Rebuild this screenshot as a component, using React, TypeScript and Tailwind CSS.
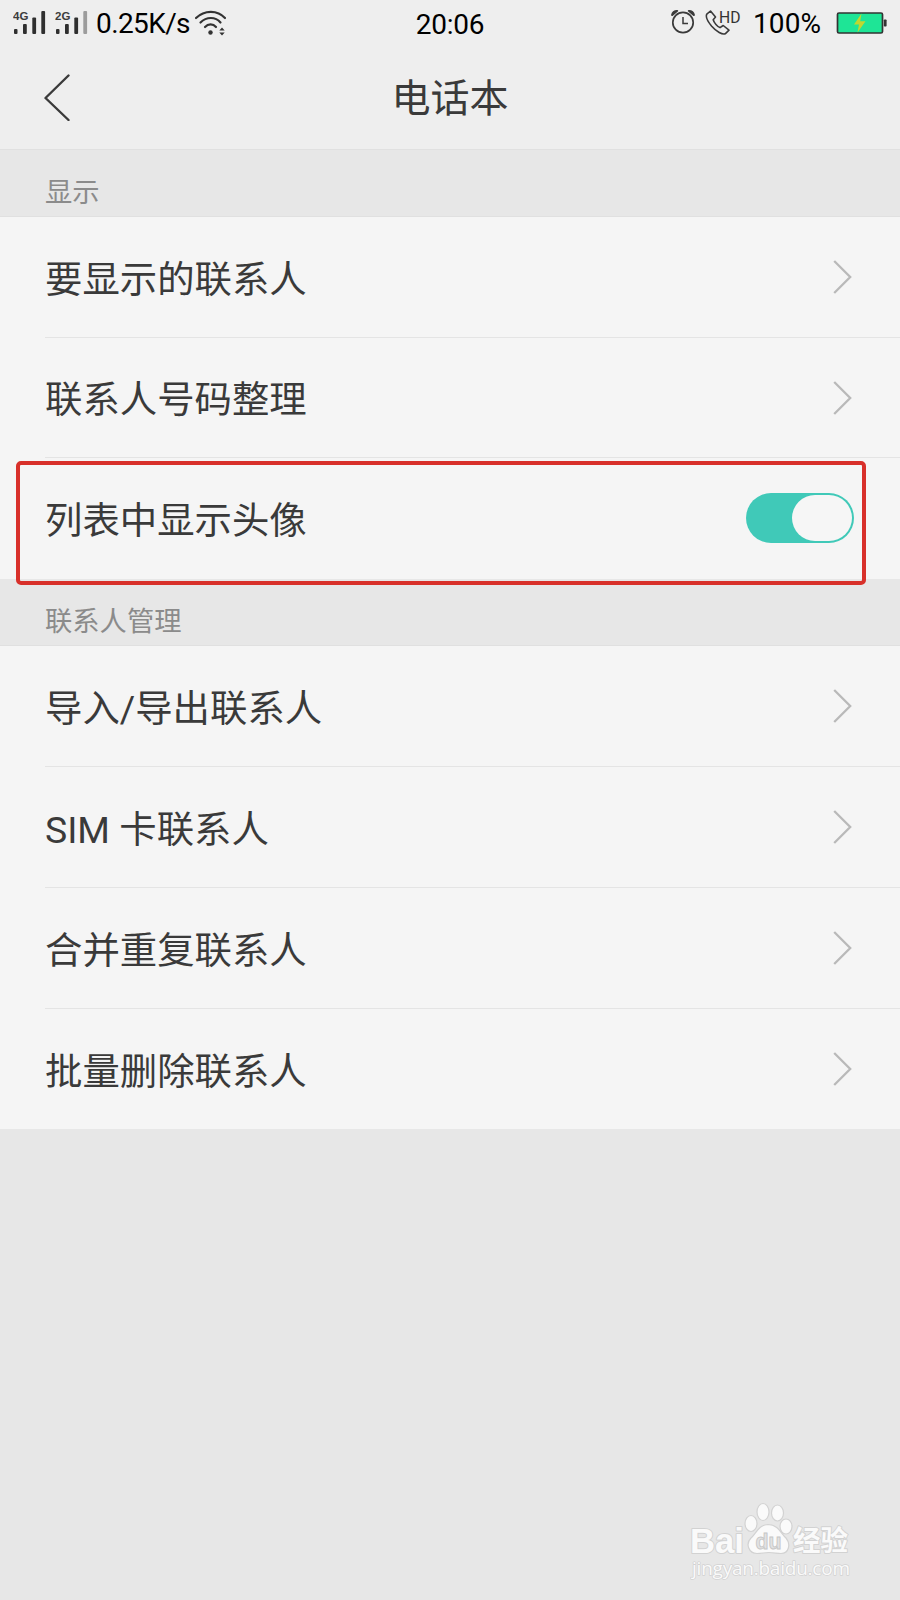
import React, { useState } from "react";

type Item = {
	label: string;
	height: string;
	toggle?: boolean;
};

type Section = {
	title: string;
	items: Item[];
};

const sections: Section[] = [
	{
		title: "显示",
		items: [
			{ label: "要显示的联系人", height: "h-[121px]" },
			{ label: "联系人号码整理", height: "h-[120px]" },
			{ label: "列表中显示头像", height: "h-[121px]", toggle: true },
		],
	},
	{
		title: "联系人管理",
		items: [
			{ label: "导入/导出联系人", height: "h-[121px]" },
			{ label: "SIM 卡联系人", height: "h-[121px]" },
			{ label: "合并重复联系人", height: "h-[121px]" },
			{ label: "批量删除联系人", height: "h-[120px]" },
		],
	},
];

const Signal: React.FC<{ label: string; weak?: boolean }> = ({
	label,
	weak,
}) => (
	<svg width="34" height="26" viewBox="0 0 34 26" fill="#2f2f2f">
		<text
			x="0"
			y="9"
			fontSize="11.5"
			fontWeight="700"
			fontFamily="Liberation Sans, sans-serif"
			fill="#3c3c3c"
		>
			{label}
		</text>
		<rect x="1" y="18" width="3.5" height="5" rx="1" />
		<rect x="10" y="13" width="3.8" height="10" rx="1" />
		<rect x="19.3" y="6.5" width="3.8" height="16.5" rx="1" />
		<rect
			x="28.3"
			y="0"
			width="3.8"
			height="23"
			rx="1"
			fill={weak ? "#9c9c9c" : "#2f2f2f"}
		/>
	</svg>
);

const Wifi = () => (
	<svg width="34" height="28" viewBox="0 0 34 28" fill="none" stroke="#333">
		<g strokeWidth="2.2" strokeLinecap="round">
			<path d="M2 8C10.5 -.3 23.5 -.3 31 8" />
			<path d="M6.5 12.5C12.5 6.5 21.5 6.5 26.5 12.5" />
			<path d="M11 17C14.3 13.5 19 13.5 22 17" />
		</g>
		<circle cx="16.5" cy="22.5" r="2.2" fill="#333" stroke="none" />
		<path
			d="M25.3 20.500l2.700-3 2.700 3zM25.300 22.500l2.700 3 2.700-3z"
			fill="#333"
			stroke="none"
		/>
	</svg>
);

const Alarm = () => (
	<svg width="26" height="26" viewBox="0 0 26 26" fill="none" stroke="#3a3a3a">
		<circle cx="13" cy="13.5" r="10.2" strokeWidth="1.7" />
		<path d="M13 8v6.500h5" strokeWidth="1.5" />
		<path
			d="M2 6C2.500 3 4.500 1.800 7.300 1.800L2.300 6zM24 6C23.500 3 21.500 1.800 18.700 1.800L23.700 6z"
			fill="#3a3a3a"
			strokeWidth="1.8"
			strokeLinejoin="round"
		/>
	</svg>
);

const CallHd = () => (
	<svg width="38" height="28" viewBox="0 0 38 28" fill="none">
		<path
			d="M5.500 2L1.800 5.200C.8 7 2 11.500 6.500 17C11.500 22.800 17.500 26 20.200 24.800L24 21.200L18.200 16.500L15 18.600C12.500 17.700 9 13.700 8.200 10.700L10.500 8Z"
			stroke="#3a3a3a"
			strokeWidth="1.6"
			strokeLinejoin="round"
		/>
		<text
			x="14"
			y="13.5"
			fontSize="15.8"
			fontWeight="400"
			textLength="21.5"
			lengthAdjust="spacingAndGlyphs"
			fontFamily="Roboto, sans-serif"
			fill="#333"
		>
			HD
		</text>
	</svg>
);

const Battery = () => (
	<svg width="51" height="23" viewBox="0 0 51 23">
		<rect x="1.5" y="1" width="45" height="20" rx="1.5" fill="#1ee596" stroke="#333" strokeWidth="1.7" />
		<rect x="47.8" y="7.5" width="2.8" height="7" rx=".8" fill="#333" />
		<path d="M25.500 1.500L18 12.500H23L21.500 20.500L29.500 9.300H24.200Z" fill="#bfd730" />
	</svg>
);

const StatusBar = () => (
	<div className="relative flex h-12 items-center justify-between px-[13px] font-[Roboto] text-[28px] font-normal text-black">
		<div className="flex items-center pb-px">
			<Signal label="4G" />
			<div className="w-2" />
			<Signal label="2G" weak />
			<span className="ml-[7px] w-[95px] whitespace-nowrap tracking-[-0.6px]">0.25K/s</span>
			<div className="ml-[3px]">
				<Wifi />
			</div>
		</div>
		<span className="absolute left-1/2 -translate-x-1/2 pt-px tracking-[-0.2px]">20:06</span>
		<div className="flex items-center pb-px">
			<div className="pb-[3px]">
				<Alarm />
			</div>
			<div className="ml-[9px] pb-px">
				<CallHd />
			</div>
			<span className="ml-[10px] mr-[12px] w-[71px] whitespace-nowrap tracking-[0.1px]">100%</span>
			<Battery />
		</div>
	</div>
);

const Chevron = () => (
	<svg width="20" height="36" viewBox="0 0 20 36" fill="none">
		<path d="M1.200 2L17.200 18L1.200 34" stroke="#b9b9b9" strokeWidth="2.3" />
	</svg>
);

const Watermark = () => (
	<svg
		className="absolute bottom-[20px] right-[44px]"
		width="166"
		height="80"
		viewBox="0 0 166 80"
		fill="#fafafa"
		stroke="#d2d2d2"
		strokeWidth="1.2"
	>
		<g paintOrder="stroke" strokeLinejoin="round" fontFamily="Liberation Sans, 'Noto Sans CJK SC', sans-serif">
			<text x="0" y="53" fontSize="35" fontWeight="700" textLength="54" lengthAdjust="spacingAndGlyphs" strokeWidth="2">
				Bai
			</text>
			<text x="103" y="50.5" fontSize="28" fontWeight="700" textLength="55" lengthAdjust="spacingAndGlyphs" strokeWidth="2">
				经验
			</text>
			<text x="2" y="74.5" fontSize="19" fontFamily="Open Sans, sans-serif" textLength="158" lengthAdjust="spacing" strokeWidth="1.5">
				jingyan.baidu.com
			</text>
		</g>
		<ellipse cx="61" cy="23.5" rx="6" ry="8" />
		<ellipse cx="73" cy="12" rx="6" ry="8.5" />
		<ellipse cx="87.5" cy="13" rx="6" ry="8" />
		<ellipse cx="96" cy="26.5" rx="6" ry="7.5" />
		<path d="M78 24.500C68 25 66 34 61 38C55 44 59 53.500 67 53.500C72 53.500 74 52.500 79 52.500S87 53.500 91 53.500C99 53.500 101 44 96 38C91 34 89 25 78 24.500Z" />
		<text x="65.5" y="49" fontSize="22" fontWeight="700" fontFamily="Liberation Sans, sans-serif" textLength="26" lengthAdjust="spacingAndGlyphs" fill="#e2e2e2" stroke="#c6c6c6" strokeWidth=".9">
			du
		</text>
	</svg>
);

const App: React.FC = () => {
	const [showAvatar, setShowAvatar] = useState(true);

	return (
		<div className="relative h-[1600px] w-[900px] overflow-hidden bg-[#e7e7e7] font-['Roboto','Noto_Sans_CJK_SC',sans-serif] text-[#3a3a3a]">
			<header className="h-[150px] border-b border-[#e0e0e0] bg-[#eeeeee]">
				<StatusBar />
				<div className="relative flex h-[100px] items-center justify-center pt-[3px]">
					<button className="absolute left-[43px] top-[25px]">
						<svg width="28" height="48" viewBox="0 0 28 48" fill="none">
							<path
								d="M25.500 2.500L2.500 25L25.500 47"
								stroke="#3a3a3a"
								strokeWidth="2.4"
								strokeLinejoin="round"
								strokeLinecap="round"
							/>
						</svg>
					</button>
					<h1 className="text-[39px] font-normal leading-none">电话本</h1>
				</div>
			</header>

			{sections.map((section) => (
				<section key={section.title}>
					<h2 className="flex h-[67px] items-center border-b border-[#e0e0e0] pl-[45px] pt-[21px] text-[27.3px] font-normal text-[#8b8b8b]">
						{section.title}
					</h2>
					<ul className="bg-[#f5f5f5]">
						{section.items.map((item, i) => (
							<li key={item.label} className={`${item.height} relative pl-[45px]`}>
								<div
									className={`flex h-full items-center justify-between pr-[47px] ${
										i < section.items.length - 1
											? "border-b border-[#e4e4e4]"
											: ""
									}`}
								>
									<span className="pt-1.5 text-[37.4px] font-normal">{item.label}</span>
									{item.toggle ? (
										<button
											onClick={() => setShowAvatar(!showAvatar)}
											className={`-mr-px mb-[2px] flex h-[50px] w-[108px] items-center rounded-full p-[2px] ${
												showAvatar
													? "justify-end bg-[#40c9b8]"
													: "justify-start bg-[#cccccc]"
											}`}
										>
											<span className="h-[46px] w-[60px] rounded-full bg-[#f6f6f6]" />
										</button>
									) : (
										<Chevron />
									)}
								</div>
								{item.toggle && (
									<div className="pointer-events-none absolute left-[16px] top-[3px] h-[124px] w-[850px] rounded-[5px] border-4 border-[#d8302a]" />
								)}
							</li>
						))}
					</ul>
				</section>
			))}

			<Watermark />
		</div>
	);
};

export default App;
